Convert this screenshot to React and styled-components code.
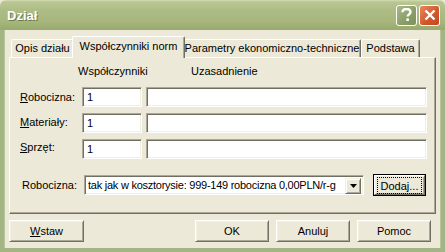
import styled, { createGlobalStyle } from "styled-components";

const GlobalStyle = createGlobalStyle`
  html, body {
    margin: 0;
    padding: 0;
    background: #ece9d8;
  }
  * {
    box-sizing: border-box;
  }
`;

const Window = styled.div`
  width: 445px;
  height: 252px;
  display: flex;
  flex-direction: column;
  background: #ece9d8;
  font-family: "Liberation Sans", Arial, sans-serif;
  font-size: 11px;
  color: #000;
  overflow: hidden;
`;

const TitleBar = styled.div`
  height: 30px;
  flex: none;
  display: flex;
  align-items: center;
  padding: 0 5px 0 7px;
  background: linear-gradient(
    to bottom,
    #d3dcb2 0px,
    #b9c694 2px,
    #aebd86 10px,
    #a6b67c 22px,
    #9aab6e 29px
  );
  border-radius: 6px 6px 0 0;
`;

const Title = styled.div`
  flex: 1;
  color: #fff;
  font-weight: bold;
  font-size: 13px;
  text-shadow: 1px 1px 0 #6d7b4a;
  padding-top: 1px;
`;

const CaptionButton = styled.div`
  width: 21px;
  height: 21px;
  margin-left: 2px;
  border: 1px solid #fff;
  border-radius: 3px;
  display: flex;
  align-items: center;
  justify-content: center;
  background: ${(p) =>
    p.$close
      ? "linear-gradient(135deg, #e9875c, #d2552b 60%, #c4461f)"
      : "linear-gradient(135deg, #a9b98a, #8a9d66 60%, #7d915a)"};
`;

const Frame = styled.div`
  flex: 1;
  display: flex;
  flex-direction: column;
  border-left: 4px solid #a4b585;
  border-right: 4px solid #a4b585;
  border-bottom: 4px solid #a4b585;
  box-shadow: inset 1px 0 0 #b7c59b, inset -1px 0 0 #b7c59b;
  padding: 6px 5px 0 5px;
`;

const TabStrip = styled.div`
  display: flex;
  align-items: flex-end;
  height: 21px;
  padding-left: 2px;
  position: relative;
  z-index: 1;
`;

const Tab = styled.div`
  width: ${(p) => p.$w}px;
  height: ${(p) => (p.$active ? 22 : 18)}px;
  margin: ${(p) => (p.$active ? "0 -2px -1px -2px" : "0")};
  padding-top: ${(p) => (p.$active ? 3 : 2)}px;
  text-align: center;
  background: #ece9d8;
  border-top: 1px solid #fff;
  border-left: 1px solid #fff;
  border-right: 1px solid #716f64;
  box-shadow: inset -1px 0 0 #aca899;
  border-radius: 2px 2px 0 0;
  white-space: nowrap;
  z-index: ${(p) => (p.$active ? 2 : 0)};
`;

const Panel = styled.div`
  height: 157px;
  border-top: 1px solid #fff;
  border-left: 1px solid #fff;
  border-right: 1px solid #716f64;
  border-bottom: 1px solid #716f64;
  box-shadow: inset -1px -1px 0 #aca899;
  padding: 7px 9px 0 10px;
  display: flex;
  flex-direction: column;
`;

const Grid = styled.div`
  display: grid;
  grid-template-columns: 58px 60px 281px;
  column-gap: 4px;
  row-gap: 6px;
  align-items: center;
`;

const Header = styled.div`
  height: 13px;
  margin-bottom: 3px;
  margin-left: ${(p) => p.$pad || 0}px;
  white-space: nowrap;
`;

const Label = styled.div`
  white-space: nowrap;
  padding-bottom: ${(p) => p.$up || 0}px;
  padding-left: ${(p) => p.$pad || 0}px;
`;

const Field = styled.div`
  height: 20px;
  background: #fff;
  border-style: solid;
  border-width: 1px;
  border-color: #aca899 #fff #fff #aca899;
  box-shadow: inset 1px 1px 0 #716f64, inset -1px -1px 0 #f1efe2;
  padding: 3px 0 0 4px;
  white-space: nowrap;
  overflow: hidden;
`;

const ComboRow = styled.div`
  display: flex;
  align-items: center;
  margin-top: 15px;
`;

const Combo = styled(Field)`
  width: 284px;
  margin-left: 7px;
  display: flex;
  padding: 2px 2px 2px 3px;
`;

const ComboText = styled.div`
  flex: 1;
  padding-top: 1px;
  letter-spacing: -0.25px;
  overflow: hidden;
`;

const DropButton = styled.div`
  width: 16px;
  height: 16px;
  background: #ece9d8;
  border-style: solid;
  border-width: 1px;
  border-color: #f1efe2 #716f64 #716f64 #f1efe2;
  box-shadow: inset 1px 1px 0 #fff, inset -1px -1px 0 #aca899;
  display: flex;
  align-items: center;
  justify-content: center;
`;

const Button = styled.div`
  width: ${(p) => p.$w || 74}px;
  height: ${(p) => p.$h || 22}px;
  background: #ece9d8;
  border-style: solid;
  border-width: 1px;
  border-color: #fff #716f64 #716f64 #fff;
  box-shadow: inset 1px 1px 0 #f1efe2, inset -1px -1px 0 #aca899;
  display: flex;
  align-items: center;
  justify-content: center;
  white-space: nowrap;
`;

const DefaultButton = styled.div`
  margin-left: 9px;
  border: 1px solid #000;
`;

const Focus = styled.span`
  border: 1px dotted #000;
  padding: 2px 3px 1px;
`;

const Footer = styled.div`
  display: flex;
  align-items: center;
  gap: 7px;
  margin-top: 6px;
  padding-right: 5px;
`;

const Spacer = styled.div`
  flex: 1;
`;

const coefRows = [
  { key: "R", rest: "obocizna:", up: 0 },
  { key: "M", rest: "ateriały:", up: 2 },
  { key: "S", rest: "przęt:", up: 4 },
];

export default function App() {
  return (
    <>
      <GlobalStyle />
      <Window>
        <TitleBar>
          <Title>Dział</Title>
          <CaptionButton>
            <svg width="11" height="14" viewBox="0 0 11 14">
              <path
                d="M1.5 4.2 C1.5 1.8 3.2 1 5.5 1 C7.8 1 9.5 2 9.5 4 C9.5 6.2 6.6 6.4 6.6 8.6"
                fill="none"
                stroke="#fff"
                strokeWidth="2.4"
              />
              <rect x="5.3" y="10.4" width="2.6" height="2.6" fill="#fff" />
            </svg>
          </CaptionButton>
          <CaptionButton $close>
            <svg width="12" height="12" viewBox="0 0 12 12">
              <path
                d="M1.5 1.5 L10.5 10.5 M10.5 1.5 L1.5 10.5"
                stroke="#fff"
                strokeWidth="2.4"
              />
            </svg>
          </CaptionButton>
        </TitleBar>
        <Frame>
          <TabStrip>
            <Tab $w={63}>Opis działu</Tab>
            <Tab $w={113} $active>
              Współczynniki norm
            </Tab>
            <Tab $w={178}>Parametry ekonomiczno-techniczne</Tab>
            <Tab $w={59}>Podstawa</Tab>
          </TabStrip>
          <Panel>
            <Grid>
              <div />
              <Header $pad={-4}>Współczynniki</Header>
              <Header $pad={45}>Uzasadnienie</Header>
              {coefRows.map((r) => (
                <>
                  <Label key={r.key + "l"} $up={r.up}>
                    <u>{r.key}</u>
                    {r.rest}
                  </Label>
                  <Field key={r.key + "c"}>1</Field>
                  <Field key={r.key + "u"} />
                </>
              ))}
            </Grid>
            <ComboRow>
              <Label $pad={2}>Robocizna:</Label>
              <Combo>
                <ComboText>
                  tak jak w kosztorysie: 999-149 robocizna 0,00PLN/r-g
                </ComboText>
                <DropButton>
                  <svg width="7" height="4" viewBox="0 0 7 4">
                    <path d="M0 0 H7 L3.5 4 Z" fill="#000" />
                  </svg>
                </DropButton>
              </Combo>
              <DefaultButton>
                <Button $w={51} $h={20}>
                  <Focus>Dodaj...</Focus>
                </Button>
              </DefaultButton>
            </ComboRow>
          </Panel>
          <Footer>
            <Button $w={75}>
              <span>
                <u>W</u>staw
              </span>
            </Button>
            <Spacer />
            <Button>OK</Button>
            <Button>Anuluj</Button>
            <Button>Pomoc</Button>
          </Footer>
        </Frame>
      </Window>
    </>
  );
}
